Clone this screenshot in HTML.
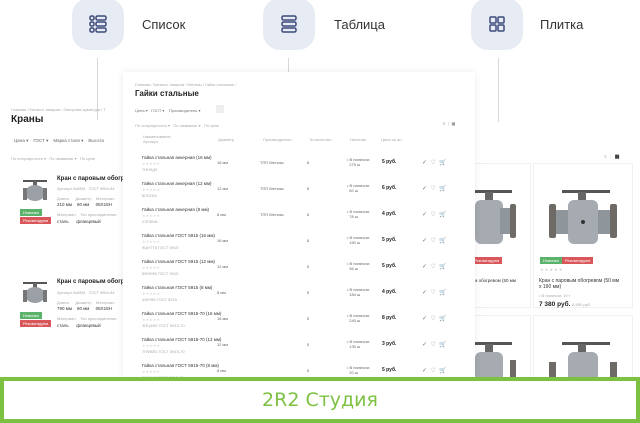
<!DOCTYPE html>
<html><head><meta charset="utf-8"><style>
*{margin:0;padding:0;box-sizing:border-box}
body{width:640px;height:423px;overflow:hidden;background:#fff;font-family:"Liberation Sans",sans-serif;position:relative;color:#222}
.a{position:absolute}
.ic{position:absolute;top:-2px;width:52px;height:52px;border-radius:17px;background:#e7ebf3}
.lab{position:absolute;top:17px;font-size:13px;color:#333}
.vl{position:absolute;width:1px;background:#d8d8d8}
.t{position:absolute;font-size:4px;color:#aaa;white-space:nowrap}
.tb{position:absolute;font-size:4.5px;color:#333;white-space:nowrap}
.pr{position:absolute;font-size:5px;font-weight:bold;color:#222}
.g{background:#5bb26a;color:#fff;font-size:4px;padding:1px 3px;position:absolute}
.r{background:#d9575a;color:#fff;font-size:4px;padding:1px 3px;position:absolute}
</style></head><body>
<div class="ic" style="left:72px"><svg class="a" style="left:17px;top:17px" width="18" height="18" viewBox="0 0 18 18" fill="none" stroke="#3d4a7a" stroke-width="1.5"><rect x="1" y="1" width="4" height="4" rx="1.5"/><rect x="1" y="7" width="4" height="4" rx="1.5"/><rect x="1" y="13" width="4" height="4" rx="1.5"/><rect x="7" y="1" width="10" height="4" rx="1.5"/><rect x="7" y="7" width="10" height="4" rx="1.5"/><rect x="7" y="13" width="10" height="4" rx="1.5"/></svg></div>
<div class="lab" style="left:142px">Список</div>
<div class="ic" style="left:263px"><svg class="a" style="left:17px;top:17px" width="18" height="18" viewBox="0 0 18 18" fill="none" stroke="#3d4a7a" stroke-width="1.5"><rect x="2" y="1" width="14" height="4" rx="1.5"/><rect x="2" y="7" width="14" height="4" rx="1.5"/><rect x="2" y="13" width="14" height="4" rx="1.5"/></svg></div>
<div class="lab" style="left:334px">Таблица</div>
<div class="ic" style="left:471px"><svg class="a" style="left:17px;top:17px" width="18" height="18" viewBox="0 0 18 18" fill="none" stroke="#3d4a7a" stroke-width="1.5"><rect x="2" y="2" width="6" height="6" rx="1"/><rect x="10" y="2" width="6" height="6" rx="1"/><rect x="2" y="10" width="6" height="6" rx="1"/><rect x="10" y="10" width="6" height="6" rx="1"/></svg></div>
<div class="lab" style="left:540px">Плитка</div>
<div class="vl" style="left:97px;top:58px;height:62px"></div>
<div class="vl" style="left:288px;top:58px;height:32px"></div>
<div class="vl" style="left:498px;top:58px;height:64px"></div>

<!-- left panel -->
<div class="t" style="left:11px;top:107px">Главная / Каталог товаров / Запорная арматура / Т</div>
<div class="a" style="left:11px;top:114px;font-size:10px;font-weight:bold">Краны</div>
<div class="t" style="left:14px;top:138px;font-size:4.5px;color:#666">Цена ▾ &nbsp;&nbsp; ГОСТ ▾ &nbsp;&nbsp; Марка стали ▾ &nbsp;&nbsp; Высота</div>
<div class="t" style="left:11px;top:156px">По популярности ▾ &nbsp; По названию ▾ &nbsp; По цене</div>
<svg class="a" style="left:20px;top:178px" width="30" height="28" viewBox="0 0 30 28"><rect x="3" y="2" width="24" height="2" fill="#555"/><rect x="13" y="3" width="4" height="6" fill="#666"/><ellipse cx="15" cy="15" rx="10" ry="8" fill="#9aa0a6"/><rect x="3" y="10" width="4" height="12" fill="#777"/><rect x="23" y="10" width="4" height="12" fill="#777"/></svg>
<div class="g" style="left:20px;top:209px">Новинка</div><div class="r" style="left:20px;top:217px">Рекомендуем</div>
<div class="a" style="left:57px;top:176px;font-size:6px;font-weight:bold;white-space:nowrap">Кран с паровым обогр</div>
<div class="t" style="left:57px;top:186px">Артикул 9a8f3d &nbsp; ГОСТ 9064-84</div>
<div class="t" style="left:57px;top:196px">Длина &nbsp;&nbsp;&nbsp;&nbsp; Диаметр &nbsp;&nbsp; Материал</div>
<div class="tb" style="left:57px;top:202px">210 мм &nbsp;&nbsp; 60 мм &nbsp;&nbsp;&nbsp; 08Х18Н</div>
<div class="t" style="left:57px;top:212px">Материал &nbsp;&nbsp; Тип присоединения</div>
<div class="tb" style="left:57px;top:219px">сталь &nbsp;&nbsp;&nbsp;&nbsp; фланцевый</div>
<svg class="a" style="left:20px;top:280px" width="30" height="28" viewBox="0 0 30 28"><rect x="3" y="2" width="24" height="2" fill="#555"/><rect x="13" y="3" width="4" height="6" fill="#666"/><ellipse cx="15" cy="15" rx="10" ry="8" fill="#9aa0a6"/><rect x="3" y="10" width="4" height="12" fill="#777"/><rect x="23" y="10" width="4" height="12" fill="#777"/></svg>
<div class="g" style="left:20px;top:312px">Новинка</div><div class="r" style="left:20px;top:320px">Рекомендуем</div>
<div class="a" style="left:57px;top:279px;font-size:6px;font-weight:bold;white-space:nowrap">Кран с паровым обогр</div>
<div class="t" style="left:57px;top:290px">Артикул 9a8f3d &nbsp; ГОСТ 9064-84</div>
<div class="t" style="left:57px;top:300px">Длина &nbsp;&nbsp;&nbsp;&nbsp; Диаметр &nbsp;&nbsp; Материал</div>
<div class="tb" style="left:57px;top:306px">790 мм &nbsp;&nbsp; 60 мм &nbsp;&nbsp;&nbsp; 08Х18Н</div>
<div class="t" style="left:57px;top:316px">Материал &nbsp;&nbsp; Тип присоединения</div>
<div class="tb" style="left:57px;top:323px">сталь &nbsp;&nbsp;&nbsp;&nbsp; фланцевый</div>

<!-- right panel -->
<div class="a" style="left:604px;top:154px;width:28px;height:5px;font-size:5px;color:#bbb">≡ ⋮ <b style="color:#333">▦</b></div>
<div class="a" style="left:465px;top:163px;width:66px;height:145px;border:1px solid #f0f0f0"></div>
<div class="a" style="left:533px;top:163px;width:100px;height:145px;border:1px solid #f0f0f0"></div>
<svg class="a" style="left:470px;top:188px" width="58" height="60" viewBox="0 0 58 60"><rect x="2" y="2" width="40" height="3" fill="#555"/><rect x="15" y="4" width="8" height="10" fill="#666"/><rect x="5" y="12" width="28" height="44" rx="6" fill="#a5abb0"/><rect x="30" y="20" width="10" height="26" fill="#8f969b"/><rect x="40" y="16" width="6" height="34" rx="2" fill="#6e6a66"/></svg>
<svg class="a" style="left:542px;top:188px" width="82" height="60" viewBox="0 0 82 60"><rect x="20" y="2" width="48" height="3" fill="#555"/><rect x="36" y="4" width="8" height="10" fill="#666"/><rect x="26" y="12" width="30" height="44" rx="6" fill="#a5abb0"/><rect x="14" y="22" width="12" height="24" fill="#8f969b"/><rect x="56" y="22" width="12" height="24" fill="#8f969b"/><rect x="7" y="16" width="7" height="34" rx="2" fill="#6e6a66"/><rect x="68" y="16" width="7" height="34" rx="2" fill="#6e6a66"/><circle cx="41" cy="34" r="2" fill="#333"/></svg>
<div class="r" style="left:471px;top:257px">Рекомендуем</div>
<div class="g" style="left:540px;top:257px">Новинка</div><div class="r" style="left:562px;top:257px">Рекомендуем</div>
<div class="t" style="left:540px;top:267px;color:#ccc">★ ★ ★ ★ ★</div>
<div class="tb" style="left:471px;top:278px">ым обогревом (50 мм</div>
<div class="tb" style="left:539px;top:278px;font-size:5px">Кран с паровым обогревом (50 мм<br>x 190 мм)</div>
<div class="t" style="left:539px;top:293px">• В наличии: 19 т</div>
<div class="a" style="left:539px;top:301px;font-size:6.5px;font-weight:bold;white-space:nowrap">7 380 руб. <span style="font-weight:normal;font-size:4px;color:#aaa">8 850 руб.</span></div>
<div class="a" style="left:465px;top:315px;width:66px;height:70px;border:1px solid #f0f0f0"></div>
<div class="a" style="left:533px;top:315px;width:100px;height:70px;border:1px solid #f0f0f0"></div>
<svg class="a" style="left:470px;top:340px" width="58" height="40" viewBox="0 0 58 40"><rect x="2" y="2" width="40" height="3" fill="#555"/><rect x="15" y="4" width="8" height="10" fill="#666"/><rect x="5" y="12" width="28" height="30" rx="6" fill="#a5abb0"/><rect x="40" y="20" width="6" height="20" fill="#6e6a66"/></svg>
<svg class="a" style="left:542px;top:340px" width="82" height="40" viewBox="0 0 82 40"><rect x="20" y="2" width="48" height="3" fill="#555"/><rect x="36" y="4" width="8" height="10" fill="#666"/><rect x="26" y="12" width="30" height="30" rx="6" fill="#a5abb0"/><rect x="7" y="22" width="7" height="20" fill="#6e6a66"/><rect x="68" y="22" width="7" height="20" fill="#6e6a66"/></svg>

<!-- middle panel -->
<div class="a" style="left:123px;top:72px;width:352px;height:306px;background:#fff;box-shadow:0 0 8px rgba(0,0,0,0.08)">
<div class="t" style="left:12px;top:10px">Главная / Каталог товаров / Метизы / Гайки стальные /</div>
<div class="a" style="left:12px;top:17px;font-size:8px;font-weight:bold;white-space:nowrap">Гайки стальные</div>
<div class="t" style="left:12px;top:36px;color:#777">Цена ▾ &nbsp; ГОСТ ▾ &nbsp;&nbsp; Производитель ▾</div>
<div class="a" style="left:93px;top:33px;width:8px;height:8px;background:#eee"></div>
<div class="t" style="left:12px;top:51px">По популярности ▾ &nbsp; По названию ▾ &nbsp; По цене</div>
<div class="t" style="left:320px;top:49px;color:#666">≡ ⋮ ▦</div>
<div class="t" style="left:20px;top:62px">Наименование<br>Артикул</div>
<div class="t" style="left:95px;top:65px">Диаметр</div>
<div class="t" style="left:140px;top:65px">Производитель</div>
<div class="t" style="left:187px;top:65px">Количество</div>
<div class="t" style="left:227px;top:65px">Наличие</div>
<div class="t" style="left:258px;top:65px">Цена за шт</div>
</div>
<div class="a" style="left:123px;top:72px;width:352px;height:306px">
<!-- rows generated -->
<div id="rows"></div>
</div>
<div class="a" style="left:123px;top:72px;width:352px;height:306px;overflow:hidden">
<div class="a" style="left:19px;top:82px;line-height:1">
</div>
</div>
<div class="a" style="left:142px;top:150px;width:320px">
<div style="position:relative;height:26px"><div class="tb" style="left:0;top:5px">Гайка стальная анкерная (16 мм)</div><div class="t" style="left:0;top:11px;color:#ddd">★★★★★</div><div class="t" style="left:0;top:17px">7HН9Д3</div><div class="t" style="left:75px;top:10px;color:#666">16 мм</div><div class="t" style="left:118px;top:10px;color:#666">ТПП Метизы</div><div class="t" style="left:165px;top:10px;color:#666">8</div><div class="t" style="left:205px;top:7px;color:#666">• В наличии:<br>&nbsp; 275 ш</div><div class="pr" style="left:240px;top:9px">5 руб.</div><div class="t" style="left:280px;top:9px;font-size:6px;color:#777">✓ &nbsp;♡ &nbsp;🛒</div></div>
<div style="position:relative;height:26px"><div class="tb" style="left:0;top:5px">Гайка стальная анкерная (12 мм)</div><div class="t" style="left:0;top:11px;color:#ddd">★★★★★</div><div class="t" style="left:0;top:17px">8ГБ2ФА</div><div class="t" style="left:75px;top:10px;color:#666">12 мм</div><div class="t" style="left:118px;top:10px;color:#666">ТПП Метизы</div><div class="t" style="left:165px;top:10px;color:#666">8</div><div class="t" style="left:205px;top:7px;color:#666">• В наличии:<br>&nbsp; 60 ш</div><div class="pr" style="left:240px;top:9px">6 руб.</div><div class="t" style="left:280px;top:9px;font-size:6px;color:#777">✓ &nbsp;♡ &nbsp;🛒</div></div>
<div style="position:relative;height:26px"><div class="tb" style="left:0;top:5px">Гайка стальная анкерная (8 мм)</div><div class="t" style="left:0;top:11px;color:#ddd">★★★★★</div><div class="t" style="left:0;top:17px">2ЛП8НА</div><div class="t" style="left:75px;top:10px;color:#666">8 мм</div><div class="t" style="left:118px;top:10px;color:#666">ТПП Метизы</div><div class="t" style="left:165px;top:10px;color:#666">8</div><div class="t" style="left:205px;top:7px;color:#666">• В наличии:<br>&nbsp; 78 ш</div><div class="pr" style="left:240px;top:9px">4 руб.</div><div class="t" style="left:280px;top:9px;font-size:6px;color:#777">✓ &nbsp;♡ &nbsp;🛒</div></div>
<div style="position:relative;height:26px"><div class="tb" style="left:0;top:5px">Гайка стальная ГОСТ 5915 (16 мм)</div><div class="t" style="left:0;top:11px;color:#ddd">★★★★★</div><div class="t" style="left:0;top:17px">9ЦН7Т8 ГОСТ 5915</div><div class="t" style="left:75px;top:10px;color:#666">16 мм</div><div class="t" style="left:165px;top:10px;color:#666">8</div><div class="t" style="left:205px;top:7px;color:#666">• В наличии:<br>&nbsp; 150 ш</div><div class="pr" style="left:240px;top:9px">5 руб.</div><div class="t" style="left:280px;top:9px;font-size:6px;color:#777">✓ &nbsp;♡ &nbsp;🛒</div></div>
<div style="position:relative;height:26px"><div class="tb" style="left:0;top:5px">Гайка стальная ГОСТ 5915 (12 мм)</div><div class="t" style="left:0;top:11px;color:#ddd">★★★★★</div><div class="t" style="left:0;top:17px">8Ф9Е9Б ГОСТ 5915</div><div class="t" style="left:75px;top:10px;color:#666">12 мм</div><div class="t" style="left:165px;top:10px;color:#666">5</div><div class="t" style="left:205px;top:7px;color:#666">• В наличии:<br>&nbsp; 96 ш</div><div class="pr" style="left:240px;top:9px">5 руб.</div><div class="t" style="left:280px;top:9px;font-size:6px;color:#777">✓ &nbsp;♡ &nbsp;🛒</div></div>
<div style="position:relative;height:26px"><div class="tb" style="left:0;top:5px">Гайка стальная ГОСТ 5915 (8 мм)</div><div class="t" style="left:0;top:11px;color:#ddd">★★★★★</div><div class="t" style="left:0;top:17px">4ЖУЯ8 ГОСТ 5915</div><div class="t" style="left:75px;top:10px;color:#666">8 мм</div><div class="t" style="left:165px;top:10px;color:#666">5</div><div class="t" style="left:205px;top:7px;color:#666">• В наличии:<br>&nbsp; 184 ш</div><div class="pr" style="left:240px;top:9px">4 руб.</div><div class="t" style="left:280px;top:9px;font-size:6px;color:#777">✓ &nbsp;♡ &nbsp;🛒</div></div>
<div style="position:relative;height:26px"><div class="tb" style="left:0;top:5px">Гайка стальная ГОСТ 5915-70 (16 мм)</div><div class="t" style="left:0;top:11px;color:#ddd">★★★★★</div><div class="t" style="left:0;top:17px">ЗПЦ4ВЗ ГОСТ 5915-70</div><div class="t" style="left:75px;top:10px;color:#666">16 мм</div><div class="t" style="left:165px;top:10px;color:#666">5</div><div class="t" style="left:205px;top:7px;color:#666">• В наличии:<br>&nbsp; 240 ш</div><div class="pr" style="left:240px;top:9px">8 руб.</div><div class="t" style="left:280px;top:9px;font-size:6px;color:#777">✓ &nbsp;♡ &nbsp;🛒</div></div>
<div style="position:relative;height:26px"><div class="tb" style="left:0;top:5px">Гайка стальная ГОСТ 5915-70 (12 мм)</div><div class="t" style="left:0;top:11px;color:#ddd">★★★★★</div><div class="t" style="left:0;top:17px">7ПФ8Й2 ГОСТ 5915-70</div><div class="t" style="left:75px;top:10px;color:#666">12 мм</div><div class="t" style="left:165px;top:10px;color:#666">5</div><div class="t" style="left:205px;top:7px;color:#666">• В наличии:<br>&nbsp; 130 ш</div><div class="pr" style="left:240px;top:9px">3 руб.</div><div class="t" style="left:280px;top:9px;font-size:6px;color:#777">✓ &nbsp;♡ &nbsp;🛒</div></div>
<div style="position:relative;height:26px"><div class="tb" style="left:0;top:5px">Гайка стальная ГОСТ 5915-70 (8 мм)</div><div class="t" style="left:0;top:11px;color:#ddd">★★★★★</div><div class="t" style="left:0;top:17px">8ВУ1Н8 ГОСТ 5915-70</div><div class="t" style="left:75px;top:10px;color:#666">8 мм</div><div class="t" style="left:165px;top:10px;color:#666">5</div><div class="t" style="left:205px;top:7px;color:#666">• В наличии:<br>&nbsp; 20 ш</div><div class="pr" style="left:240px;top:9px">5 руб.</div><div class="t" style="left:280px;top:9px;font-size:6px;color:#777">✓ &nbsp;♡ &nbsp;🛒</div></div>
</div>

<!-- banner -->
<div class="a" style="left:0;top:377px;width:640px;height:46px;background:#7cc142;padding:4px"><div style="background:#fff;width:100%;height:100%;text-align:center;font-size:19px;line-height:38px;color:#7cc142;font-family:'DejaVu Sans',sans-serif">2R2 Студия</div></div>
</body></html>
